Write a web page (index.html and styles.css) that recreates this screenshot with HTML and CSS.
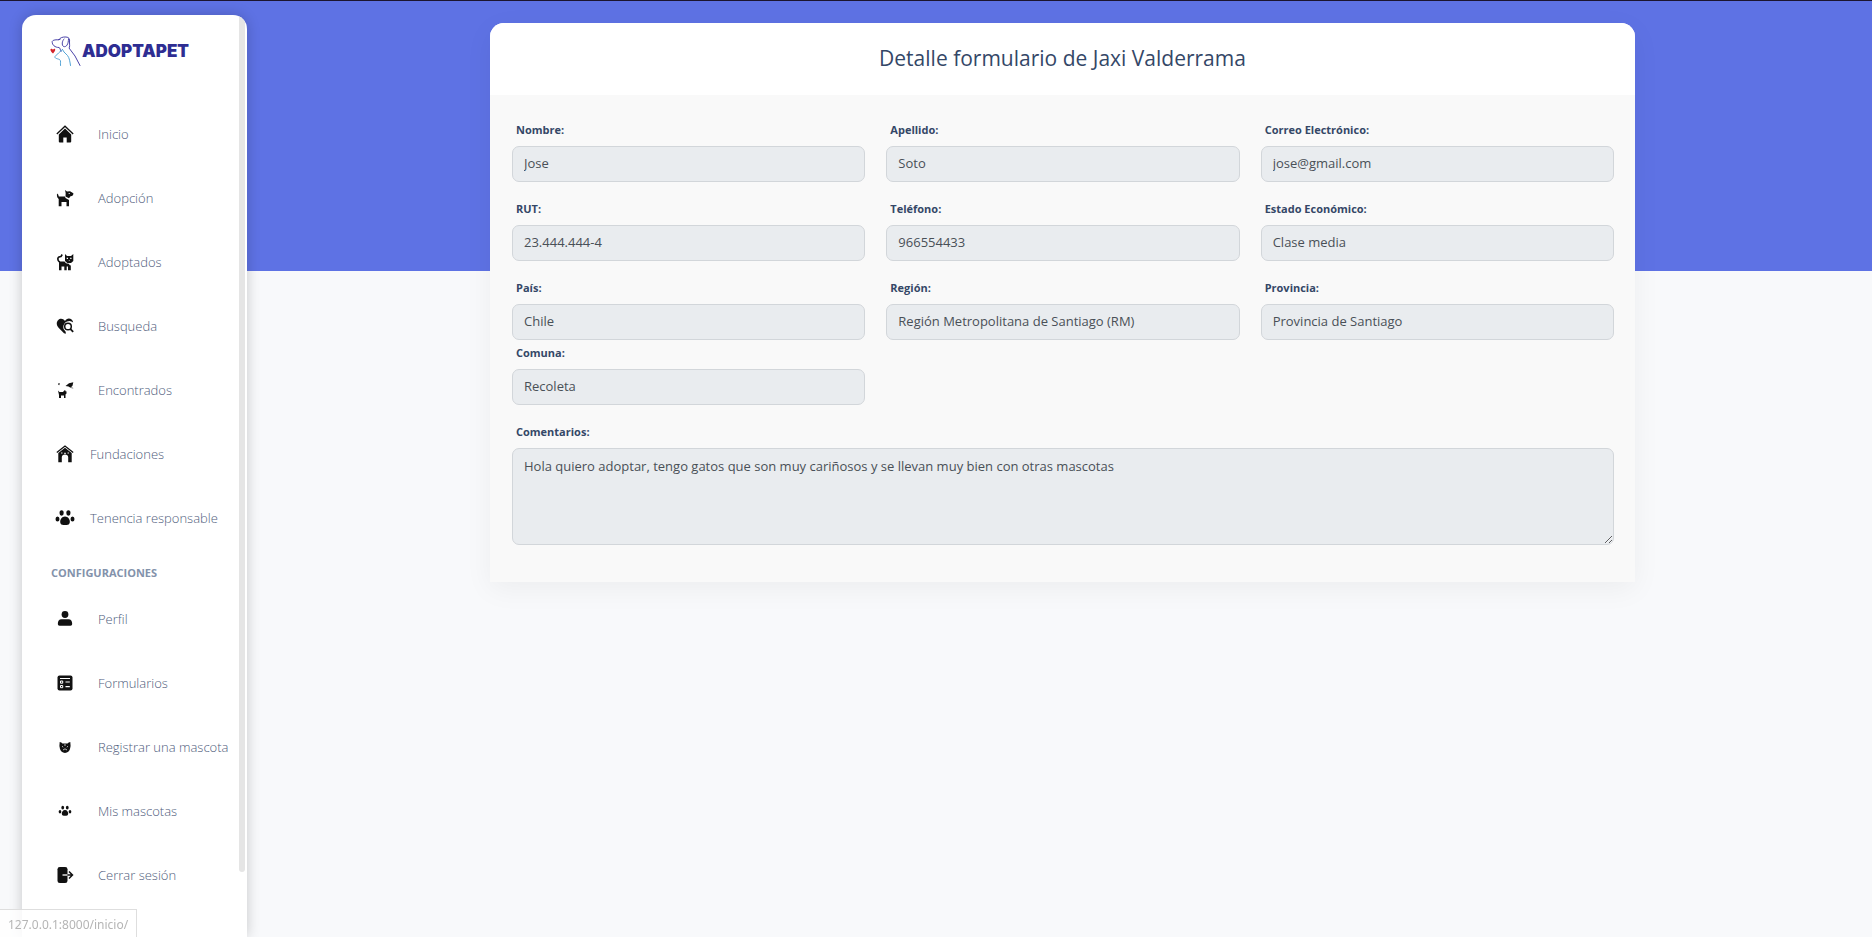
FILE: index.html
```html
<!DOCTYPE html>
<html lang="es">
<head>
<meta charset="utf-8">
<title>Adoptapet - Detalle formulario</title>
<link rel="stylesheet" href="styles.css">
</head>
<body>
<div class="page">
  <aside class="sidebar">
    <a class="brand" href="#">
      <svg class="brand-mark" viewBox="0 0 31 30" width="31" height="30" fill="none" stroke-width="1" stroke-linecap="round" stroke-linejoin="round">
        <g stroke="#4b44a8">
          <path d="M10 3.500C6 4 3 3.500 2.200 5.500C2 9 5 11.500 9 11.500C10.500 12 10 14 11 15.500"/>
          <path d="M8.500 4C10 1.500 13 .8 16 1C19 1.200 20 3 19.500 6C19.500 9 20 11 19 12L25 20L30 29.500"/>
          <path d="M14 3C12 5 11.500 9 13.500 10.500C16.500 11.500 18.500 8 18.500 3"/>
        </g>
        <g stroke="#55a5d6">
          <path d="M12.500 13.500L8.500 17L5 20.500C4.500 22.500 7 22.500 9.500 23.500C11.500 25 10 27 10.500 29.500"/>
          <path d="M12.500 13.500L14 16L17.500 19.500C19.500 22 20 26 20.500 29.500"/>
        </g>
        <path d="M3 17.500C.5 15.500-.3 13.200 1.200 12.800C2.300 12.500 2.800 13.500 3 13.800C3.400 13 4.600 12.400 5.100 13.200C5.600 14.500 4.500 16 3 17.500Z" fill="#d3242b"/>
      </svg>
      <span class="brand-name">ADOPTAPET</span>
    </a>
    <nav>
      <ul class="menu">
        <li><a class="item" href="#"><svg class="icon" viewBox="0 0 18 18"><path d="M.8 9L9 1.200L17.200 9" fill="none" stroke="#111" stroke-width="1.300"/><path d="M2.800 9.600L9 3.600L15.200 9.600V16.500Q15.200 17.500 14.200 17.500H10.700V12.500H7.300V17.500H3.800Q2.800 17.500 2.800 16.500Z"/></svg><span class="text">Inicio</span></a></li>
        <li><a class="item" href="#"><svg class="icon" viewBox="0 0 18 18"><path d="M1 4.500Q2.500 5 2.800 7.500H9L9.500 9L13 11V17.300H10.500V13H5.500V17.300H2.700V10Q.5 8.500 1 4.500Z"/><path fill-rule="evenodd" d="M9 1L11 2.500L14 2.200L17.400 4.200Q17.500 7 14.500 7.300L13 9.300L9.500 7.500Q10 3.500 9 1ZM12.700 4.100V5.100H13.700V4.100Z"/></svg><span class="text">Adopción</span></a></li>
        <li><a class="item" href="#"><svg class="icon" viewBox="0 0 18 18"><path d="M6.200 1.500L5 3.500Q2 3.500 1.800 5.800Q2 8.500 4 9" fill="none" stroke="#111" stroke-width="1.600"/><path d="M3 8.500H8.500Q9.500 11 13.300 10.800V12L14.800 12.500V17.300H12V13.500H10.700V17.300H8.300V13.500H5.500V17.300H3Z"/><path fill-rule="evenodd" d="M9 1L11 3H15L17.300 1V8L15 10H11.300L9 8ZM10.700 4.800V5.900H12V4.800ZM14.200 4.800V5.900H15.500V4.800ZM12.500 7L13.200 7.800L14 7Z"/></svg><span class="text">Adoptados</span></a></li>
        <li><a class="item" href="#"><svg class="icon" viewBox="0 0 18 18"><path d="M9 4C11-.2 16.500 1 17.200 5.500Q14.500 3 11 4.500C6.500 6.500 6.500 12 9 13.700Q10 14.500 9.800 16.700L8 16.200L2.800 11C-3 5 5-2 9 4Z"/><circle cx="12" cy="9.500" r="3.300" fill="none" stroke="#111" stroke-width="1.500"/><path d="M14.200 11.800L17.200 14.800" stroke="#111" stroke-width="1.800"/></svg><span class="text">Busqueda</span></a></li>
        <li><a class="item" href="#"><svg class="icon" viewBox="0 0 18 18"><path d="M2 9.500L3.500 11H7L8.500 9.300L10.500 10.500V12.500L9.500 13.500V17H8V14.500H5V17H3V14Z"/><path d="M9.500 5L13 2.200L17.300 1.200L16.500 4.800L14.500 6.800L12.500 5.500Z"/><path d="M2 2.200H4V3L3.200 4.200L2 3.800Z" fill="#555"/><path d="M14.800 6.500L17.200 7.200M8.500 9L9.500 10.500" stroke="#666" stroke-width=".8"/></svg><span class="text">Encontrados</span></a></li>
        <li><a class="item item-near" href="#"><svg class="icon" viewBox="0 0 18 18"><path d="M.8 7.500L9 1L17.200 7.500" fill="none" stroke="#111" stroke-width="1.300"/><path fill-rule="evenodd" d="M2.300 8L9 2.800L15.700 8V17.300H12.200V12Q12 9.500 9 9.500Q6 9.500 5.800 12V17.300H2.300Z"/><path d="M5 8H6.500M11.500 8H13M8 8.300H10" stroke="#fff" stroke-width=".9"/></svg><span class="text">Fundaciones</span></a></li>
        <li><a class="item item-near" href="#"><svg class="icon icon-wide" viewBox="0 0 20 18"><ellipse cx="6.600" cy="4" rx="2.100" ry="2.700"/><ellipse cx="13.400" cy="4" rx="2.100" ry="2.700"/><ellipse cx="2.500" cy="10" rx="2" ry="2.600"/><ellipse cx="17.500" cy="10" rx="2" ry="2.600"/><path d="M10 7.500C13 7.500 15 10.500 14.800 13C14.500 16 12.500 16 10 16C7.500 16 5.500 16 5.200 13C5 10.500 7 7.500 10 7.500Z"/></svg><span class="text">Tenencia responsable</span></a></li>
      </ul>
      <h2 class="menu-title">CONFIGURACIONES</h2>
      <ul class="menu">
        <li><a class="item" href="#"><svg class="icon" viewBox="0 0 18 18"><circle cx="9" cy="4.500" r="3.400"/><path d="M5.500 9.300H12.500Q16.200 9.300 16.200 14Q16.200 15.700 14.500 15.700H3.500Q1.800 15.700 1.800 14Q1.800 9.300 5.500 9.300Z"/></svg><span class="text">Perfil</span></a></li>
        <li><a class="item" href="#"><svg class="icon" viewBox="0 0 18 18"><rect x="1.500" y="1.500" width="15" height="15" rx="2"/><path d="M4 4.500H14M9.500 8H13.800M9.500 12.700H13.800" stroke="#fff" stroke-width="1.200"/><path d="M4.500 7H6.700V9.200H4.500ZM4.500 11.500H6.700V13.700H4.500Z" fill="none" stroke="#fff" stroke-width="1"/></svg><span class="text">Formularios</span></a></li>
        <li><a class="item" href="#"><svg class="icon" viewBox="0 0 18 18"><path d="M3.700 4Q5.500 4.300 6.500 5.500H11.500Q12.500 4.300 14.300 4Q15 8 14 11Q13 14.500 9 15Q5 14.500 4 11Q3 8 3.700 4Z"/><path d="M6 8.200L7.200 9.200M12 8.200L10.800 9.200M9 6V8M7 12L9 10.800L11 12" fill="none" stroke="#fff" stroke-width=".7"/></svg><span class="text">Registrar una mascota</span></a></li>
        <li><a class="item" href="#"><svg class="icon icon-small" viewBox="0 0 20 18"><ellipse cx="6.600" cy="4" rx="2.100" ry="2.700"/><ellipse cx="13.400" cy="4" rx="2.100" ry="2.700"/><ellipse cx="2.500" cy="10" rx="2" ry="2.600"/><ellipse cx="17.500" cy="10" rx="2" ry="2.600"/><path d="M10 7.500C13 7.500 15 10.500 14.800 13C14.500 16 12.500 16 10 16C7.500 16 5.500 16 5.200 13C5 10.500 7 7.500 10 7.500Z"/></svg><span class="text">Mis mascotas</span></a></li>
        <li><a class="item" href="#"><svg class="icon" viewBox="0 0 18 18"><path d="M3.800 1H9.200Q11.500 1 11.500 3.300V14.700Q11.500 17 9.200 17H3.800Q1.500 17 1.500 14.700V3.300Q1.500 1 3.800 1Z"/><path d="M6.500 9H11.500" stroke="#fff" stroke-width="1.300"/><path d="M11.500 9H16M13 5.500L16.500 9L13 12.500" fill="none" stroke="#111" stroke-width="1.500"/></svg><span class="text">Cerrar sesión</span></a></li>
      </ul>
    </nav>
    <div class="scroll-thumb"></div>
  </aside>

  <main class="content">
    <section class="card">
      <header class="card-head"><h1>Detalle formulario de Jaxi Valderrama</h1></header>
      <form class="card-body">
        <div class="row">
          <div class="field"><label for="nombre">Nombre:</label><input id="nombre" value="Jose" readonly></div>
          <div class="field"><label for="apellido">Apellido:</label><input id="apellido" value="Soto" readonly></div>
          <div class="field"><label for="correo">Correo Electrónico:</label><input id="correo" value="jose@gmail.com" readonly></div>
        </div>
        <div class="row">
          <div class="field"><label for="rut">RUT:</label><input id="rut" value="23.444.444-4" readonly></div>
          <div class="field"><label for="telefono">Teléfono:</label><input id="telefono" value="966554433" readonly></div>
          <div class="field"><label for="estado">Estado Económico:</label><input id="estado" value="Clase media" readonly></div>
        </div>
        <div class="row row-tight">
          <div class="field"><label for="pais">País:</label><input id="pais" value="Chile" readonly></div>
          <div class="field"><label for="region">Región:</label><input id="region" value="Región Metropolitana de Santiago (RM)" readonly></div>
          <div class="field"><label for="provincia">Provincia:</label><input id="provincia" value="Provincia de Santiago" readonly></div>
        </div>
        <div class="row">
          <div class="field"><label for="comuna">Comuna:</label><input id="comuna" value="Recoleta" readonly></div>
        </div>
        <div class="field"><label for="comentarios">Comentarios:</label><textarea id="comentarios" readonly>Hola quiero adoptar, tengo gatos que son muy cariñosos y se llevan muy bien con otras mascotas</textarea></div>
      </form>
    </section>
  </main>
</div>
<div class="link-status">127.0.0.1:8000/inicio/</div>
</body>
</html>
```
FILE: styles.css
```css
* { box-sizing: border-box; }

body {
  margin: 0;
  background: linear-gradient(#5e72e4, #5e72e4) top / 100% 271px no-repeat #f8f9fb;
  font-family: "Open Sans", "Liberation Sans", sans-serif;
  font-size: 13px;
  color: #67748e;
}

.page {
  display: flex;
  height: 100vh;
  overflow: hidden;
  border-top: 1px solid #1c1530;
}

.sidebar {
  position: relative;
  flex: none;
  width: 225px;
  margin: 14px 0 0 22px;
  border-radius: 14px 14px 0 0;
  background: #fff;
  box-shadow: 0 0 14px rgba(0, 0, 0, .2);
  overflow: hidden;
}

.brand {
  display: flex;
  align-items: center;
  gap: 1px;
  height: 71px;
  padding: 0 0 0 28px;
  margin-bottom: 16px;
  text-decoration: none;
}

.brand-name {
  font-family: Inter, sans-serif;
  font-weight: 900;
  font-size: 17px;
  line-height: 20px;
  color: #2e2d92;
}

.menu {
  margin: 0;
  padding: 0;
  list-style: none;
}

.item {
  display: flex;
  align-items: center;
  gap: 24px;
  height: 64px;
  padding-left: 34px;
  color: #4f5d7c;
  font-weight: 300;
  line-height: 20px;
  text-decoration: none;
}

.item-near { gap: 16px; }

.icon {
  flex: none;
  width: 18px;
  height: 18px;
  fill: #111;
}

.icon-wide { width: 20px; margin: 0 -1px; }
.icon-small { height: 12px; }

.menu-title {
  margin: 13px 0 4px;
  padding-left: 29px;
  font-size: 11px;
  line-height: 20px;
  font-weight: 700;
  color: #8392ab;
}

.scroll-thumb {
  position: absolute;
  top: 0;
  right: 2px;
  width: 6px;
  height: 93%;
  border-radius: 0 0 3px 3px;
  background: #e5e5e5;
}

.content {
  flex: 1;
  padding: 22px 237px 0 243px;
}

.card {
  border-radius: 14px 14px 0 0;
  background: #f9f9f9;
  box-shadow: 0 7px 29px rgba(0, 0, 0, .05);
}

.card-head {
  padding: 19px 20px 21px;
  border-radius: 14px 14px 0 0;
  background: #fff;
  text-align: center;
}

.card-head h1 {
  margin: 0;
  font-size: 21px;
  line-height: 32px;
  font-weight: 500;
  color: #344767;
}

.card-body {
  padding: 22px 21px 37px 22px;
}

.row {
  display: grid;
  grid-template-columns: repeat(3, 1fr);
  gap: 21px;
  margin-bottom: 14px;
}

.row-tight { margin-bottom: 0; }

.field {
  display: flex;
  flex-direction: column;
}

.field label {
  padding: 3px 4px 6px;
  font-size: 11px;
  line-height: 20px;
  font-weight: 700;
  color: #344767;
}

.field input,
.field textarea {
  width: 100%;
  margin: 0;
  border: 1px solid #d2d6da;
  border-radius: 7px;
  background: #e9ecef;
  color: #495057;
  font: inherit;
  line-height: 20px;
  padding: 7px 11px;
  outline: 0;
}

.field input {
  height: 36px;
  padding: 6px 11px 8px;
}

.field textarea {
  display: block;
  height: 97px;
  resize: vertical;
}

.link-status {
  position: fixed;
  left: 0;
  bottom: 0;
  padding: 5px 8px 2px;
  border: 1px solid #dedede;
  border-width: 1px 1px 0 0;
  background: rgba(255, 255, 255, .8);
  color: #b5b5b5;
  font-family: "Noto Sans", sans-serif;
  font-size: 12px;
  line-height: 20px;
}
```
